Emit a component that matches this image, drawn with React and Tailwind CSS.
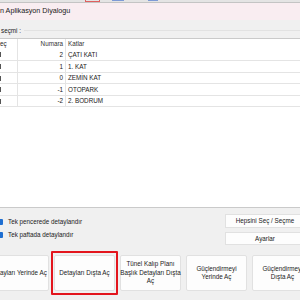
import React from "react";

const rows = [
  { n: "2", k: "ÇATI KATI", h: "h-[12px]" },
  { n: "1", k: "1. KAT", h: "h-[12px]" },
  { n: "0", k: "ZEMİN KAT", h: "h-[11px]" },
  { n: "-1", k: "OTOPARK", h: "h-[12px]" },
  { n: "-2", k: "2. BODRUM", h: "h-[11px]" },
];

function Btn({ children, extra = "" }) {
  return (
    <div
      className={`w-[61px] h-[36px] shrink-0 bg-[#fdfdfd] border border-[#e1e1e1] rounded-[2px] flex items-center justify-center text-center whitespace-nowrap leading-[8.5px] text-[6.3px] text-[#1a1a1a] ${extra}`}
    >
      <div>{children}</div>
    </div>
  );
}

export default function App() {
  return (
    <div
      className="w-[300px] h-[300px] overflow-hidden bg-[#f0f0f0] flex flex-col text-[#1a1a1a]"
      style={{ fontFamily: '"Liberation Sans", Arial, sans-serif' }}
    >
      {/* top strip */}
      <div className="h-[3px] shrink-0 bg-[#e4e4e4] border-b border-[#c4c4c4] flex items-start">
        <div className="ml-[85px] w-[15px] h-[2px] border-l border-r border-b border-[#e06060]" />
        <div className="ml-[12px] w-[12px] h-px bg-[#7d9ad6]" />
        <div className="ml-[24px] w-[10px] h-px bg-[#7d9ad6]" />
      </div>
      {/* title */}
      <div className="h-[17px] shrink-0 bg-[#f9edf1] flex items-center text-[7.2px] pl-0">
        n Aplikasyon Diyalogu
      </div>
      {/* group label */}
      <div className="h-[18px] shrink-0 flex items-start">
        <div className="mt-[7px] ml-[1px] h-[8px] leading-[8px] text-[6.3px]">seçmi :</div>
        <div className="flex-1 mt-[10px] ml-[3px] h-px bg-[#e2e2e2]" />
      </div>
      {/* list */}
      <div className="h-[170px] shrink-0 bg-white border-t border-b border-[#cacaca] flex flex-col text-[6.3px]">
        <div className="h-[10px] shrink-0 flex items-center">
          <div className="w-[18px] h-full border-r border-[#e4e4e4] flex items-center">eç</div>
          <div className="w-[48px] h-full border-r border-[#e4e4e4] flex items-center justify-end pr-[2px] text-[#333]">
            Numara
          </div>
          <div className="pl-[2px] text-[#333]">Katlar</div>
        </div>
        {rows.map((r) => (
          <div key={r.n} className={`${r.h} shrink-0 flex border-b border-[#e4e4e4]`}>
            <div className="w-[18px] h-full border-r border-[#e4e4e4] flex items-center">
              <div className="w-px h-[5px] bg-[#555]" />
            </div>
            <div className="w-[48px] h-full border-r border-[#e4e4e4] flex items-center justify-end pr-[2px]">
              {r.n}
            </div>
            <div className="pl-[2px] flex items-center">{r.k}</div>
          </div>
        ))}
      </div>
      {/* options */}
      <div className="h-[43px] shrink-0 flex text-[6.3px]">
        <div className="flex flex-col pt-[10px] gap-[5px]">
          <div className="flex items-center h-[8px]">
            <div className="w-[3px] h-[6px] bg-[#1f6fd1] rounded-r-[1px]" />
            <span className="ml-[5px]">Tek pencerede detaylandır</span>
          </div>
          <div className="flex items-center h-[8px]">
            <div className="w-[3px] h-[6px] bg-[#1f6fd1] rounded-r-[1px]" />
            <span className="ml-[5px]">Tek paftada detaylandır</span>
          </div>
        </div>
        <div className="ml-auto flex flex-col pt-[6px] gap-[4px] mr-[-5px]">
          <div className="w-[80px] h-[14px] bg-[#fdfdfd] border border-[#e1e1e1] flex items-center justify-center">
            Hepsini Seç / Seçme
          </div>
          <div className="w-[80px] h-[13px] bg-[#fdfdfd] border border-[#e1e1e1] flex items-center justify-center">
            Ayarlar
          </div>
        </div>
      </div>
      {/* bottom buttons */}
      <div className="flex gap-[5px] ml-[-12px] mt-[4px]">
        <Btn extra="border-[#a9c9ea]">Detayları Yerinde Aç</Btn>
        <div className="relative shrink-0">
          <Btn>Detayları Dışta Aç</Btn>
          <div className="absolute left-[-3px] top-[-4px] w-[67px] h-[44px] border-2 border-[#e3151d] rounded-[1px]" />
        </div>
        <Btn>
          Tünel Kalıp Planı
          <br />
          Başlık Detayları Dışta
          <br />
          Aç
        </Btn>
        <Btn>
          Güçlendirmeyi
          <br />
          Yerinde Aç
        </Btn>
        <Btn>
          Güçlendirmeyi
          <br />
          Dışta Aç
        </Btn>
      </div>
    </div>
  );
}
